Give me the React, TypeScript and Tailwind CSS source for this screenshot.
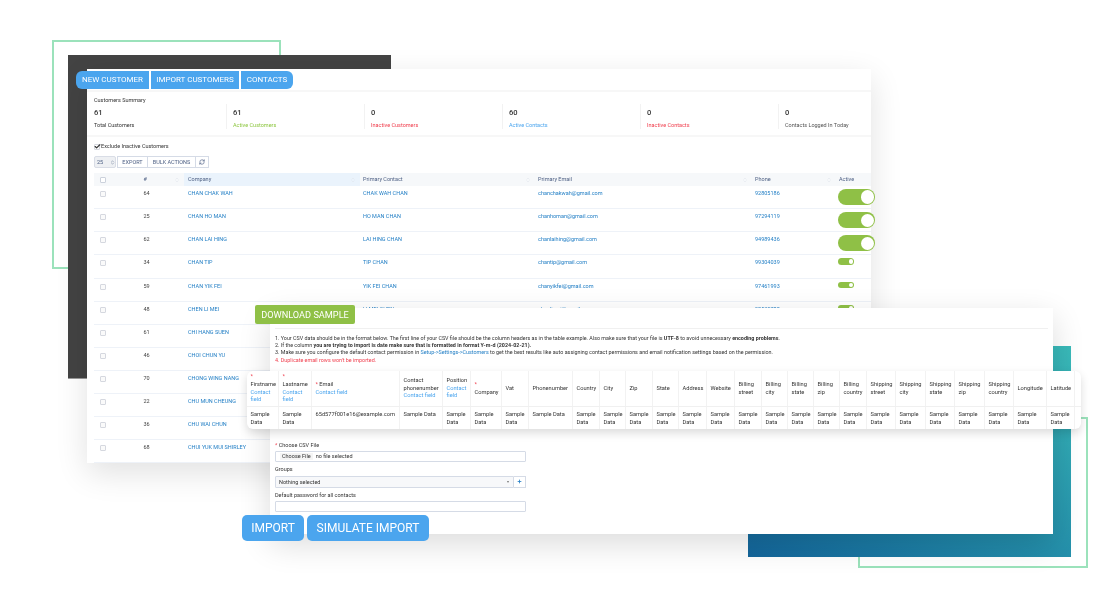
import React from 'react'
import { RefreshCw, Check, Plus, ChevronsUpDown } from 'lucide-react'

const customers = [
  ['64', 'CHAN CHAK WAH', 'CHAK WAH CHAN', 'chanchakwah@gmail.com', '92805186'],
  ['25', 'CHAN HO MAN', 'HO MAN CHAN', 'chanhoman@gmail.com', '97294119'],
  ['62', 'CHAN LAI HING', 'LAI HING CHAN', 'chanlaihing@gmail.com', '94989436'],
  ['34', 'CHAN TIP', 'TIP CHAN', 'chantip@gmail.com', '99304039'],
  ['59', 'CHAN YIK FEI', 'YIK FEI CHAN', 'chanyikfei@gmail.com', '97461993'],
  ['48', 'CHEN LI MEI', 'LI MEI CHEN', 'chenlimei@gmail.com', '98530788'],
  ['61', 'CHI HANG SUEN', 'CHI HANG SUEN', 'chihangsuen@gmail.com', '96112045'],
  ['46', 'CHOI CHUN YU', 'CHUN YU CHOI', 'choichunyu@gmail.com', '92340718'],
  ['70', 'CHONG WING NANG', 'WING NANG CHONG', 'chongwingnang@gmail.com', '93877120'],
  ['22', 'CHU MUN CHEUNG', 'MUN CHEUNG CHU', 'chumuncheung@gmail.com', '91220456'],
  ['36', 'CHU WAI CHUN', 'WAI CHUN CHU', 'chuwaichun@gmail.com', '95018823'],
  ['68', 'CHUI YUK MUI SHIRLEY', 'YUK MUI CHUI', 'chuiyukmui@gmail.com', '90673341'],
]

const summary = [
  { value: '61', label: 'Total Customers', color: 'text-[#333]' },
  { value: '61', label: 'Active Customers', color: 'text-[#8cc63f]' },
  { value: '0', label: 'Inactive Customers', color: 'text-[#f0404f]' },
  { value: '60', label: 'Active Contacts', color: 'text-[#4ba5ee]' },
  { value: '0', label: 'Inactive Contacts', color: 'text-[#f0404f]' },
  { value: '0', label: 'Contacts Logged In Today', color: 'text-[#555]' },
]

const csvColumns = [
  'Country', 'City', 'Zip', 'State', 'Address', 'Website', 'Billing street', 'Billing city', 'Billing state', 'Billing zip',
  'Billing country', 'Shipping street', 'Shipping city', 'Shipping state', 'Shipping zip', 'Shipping country', 'Longitude', 'Latitude',
]

const gridRow = 'grid grid-cols-[46px_44px_176px_175px_217px_84px_1fr]'
const csvGrid = 'grid grid-cols-[32px_33px_88px_43px_28px_31px_27px_44px_27px_26px_27px_26px_28px_28px_27px_26px_26px_26px_27px_29px_30px_29px_30px_29px_33px_28px]'

const Toggle = ({ big }: { big: boolean }) =>
  big ? (
    <div className="flex h-4 w-[37px] items-center justify-end rounded-full bg-[#8fc046] pr-[1px]">
      <div className="h-[13.5px] w-[13.5px] rounded-full bg-white" />
    </div>
  ) : (
    <div className="flex h-[6.5px] w-4 items-center justify-end rounded-full bg-[#8fc046] pr-[1px]">
      <div className="h-[4.5px] w-[4.5px] rounded-full bg-white" />
    </div>
  )

const SortMark = () => (
  <ChevronsUpDown className="absolute right-1 top-1/2 h-[6px] w-[6px] -translate-y-1/2 text-[#dfe3ea]" strokeWidth={2} />
)

const Required = () => <span className="text-[#f0404f]">*</span>

const CsvHead = ({ children }: { children: React.ReactNode }) => (
  <div className="flex items-center border-r border-[#f2f2f2] px-[3.5px]">
    <div>{children}</div>
  </div>
)

const CsvCell = ({ children }: { children: React.ReactNode }) => (
  <div className="flex items-start border-r border-[#f2f2f2] px-[3.5px] pt-[4px]">{children}</div>
)

const ContactField = () => <div className="text-[#4ba5ee]">Contact field</div>

export default function App() {
  return (
    <div className="relative h-[615px] w-[1112px] overflow-hidden bg-white font-['Roboto',sans-serif] blur-[0.3px]">
      {/* Decoration behind the windows */}
      <div className="absolute left-[52px] top-[40px] h-[229px] w-[229px] border-2 border-[#9be2bb]" />
      <div className="absolute left-[858px] top-[417px] h-[151px] w-[230px] border-2 border-[#9be2bb]" />
      <div className="absolute left-[68px] top-[55px] h-[324px] w-[323px] border-b border-[#999] bg-[#434343]" />
      <div className="absolute left-[748px] top-[346px] h-[211px] w-[323px] bg-gradient-to-tr from-[#14669b] to-[#3abab9]" />

      {/* Customers window */}
      <div className="absolute left-[87px] top-[69px] w-[784px] bg-white shadow-[0_10px_30px_rgba(0,0,0,0.12)]">
        <div className="h-[21px]" />
        <div className="h-[2px] bg-[#f7f7f7]" />
        <div className="h-[43px] px-[7px] pt-[5px]">
          <div className="text-[5.5px] leading-[7px] text-[#333]">Customers Summary</div>
          <div className="grid grid-cols-[138px_138px_138px_138px_138px_1fr]">
            {summary.map((s, i) => (
              <div key={i} className={i === 0 ? 'h-[25px]' : 'h-[25px] -ml-[6px] border-l border-[#f2f2f2] pl-[6px]'}>
                <div className="text-[7.5px] font-medium leading-[18px] text-[#333]">{s.value}</div>
                <div className={`text-[5.5px] leading-[7px] ${s.color}`}>{s.label}</div>
              </div>
            ))}
          </div>
        </div>
        <div className="h-[2px] bg-[#f7f7f7]" />

        <div className="h-[36px] px-[7px]">
          <div className="flex h-[19px] items-center gap-[1px] text-[5.5px] text-[#333]">
            <div className="flex h-[6px] w-[6px] items-center justify-center rounded-[1px] border border-[#d5d8df]">
              <Check className="h-[7px] w-[7px] shrink-0 text-[#333]" strokeWidth={4} />
            </div>
            Exclude Inactive Customers
          </div>
          <div className="flex h-[12px] items-center text-[5.5px] text-[#4f6185]">
            <div className="mr-[1px] flex h-[12px] w-[22px] items-center justify-between rounded-[2px] border border-[#d9dde6] bg-[#eef0f3] pl-[2px]">
              25
              <ChevronsUpDown className="h-[5px] w-[5px]" />
            </div>
            <div className="flex h-[12px] w-[31px] items-center justify-center border border-[#d5dbe6]">EXPORT</div>
            <div className="flex h-[12px] w-[48px] items-center justify-center border-y border-r border-[#d5dbe6]">BULK ACTIONS</div>
            <div className="flex h-[12px] w-[13px] items-center justify-center border-y border-r border-[#d5dbe6]">
              <RefreshCw className="h-[6px] w-[6px]" strokeWidth={2.5} />
            </div>
          </div>
        </div>

        <div className="pl-[7px] text-[5.5px]">
          <div className={`${gridRow} h-[13.2px] items-stretch bg-[#f6f8fa] leading-[13.2px] text-[#4f6185]`}>
            <div className="flex items-center pl-[6px]">
              <div className="h-[6px] w-[6px] rounded-[1px] border border-[#ccd2dc] bg-white" />
            </div>
            <div className="relative pl-[3.5px]">#<SortMark /></div>
            <div className="relative bg-[#eaf3fc] pl-[4px]">Company<SortMark /></div>
            <div className="relative pl-[3px]">Primary Contact<SortMark /></div>
            <div className="relative pl-[3px]">Primary Email<SortMark /></div>
            <div className="relative pl-[3px]">Phone<SortMark /></div>
            <div className="pl-[3px]">Active</div>
          </div>
          {customers.map((c, i) => (
            <div key={c[0]} className={`${gridRow} h-[23.1px] border-b border-[#eef2f8] pt-[3px] leading-[8px] text-[#2580c6]`}>
              <div className="pl-[6px] pt-[2px]">
                <div className="h-[6px] w-[6px] rounded-[1px] border border-[#d5d8df] bg-[#fafafa]" />
              </div>
              <div className="pl-[3.5px] text-[#444]">{c[0]}</div>
              <div className="pl-[4px]">{c[1]}</div>
              <div className="pl-[3px]">{c[2]}</div>
              <div className="pl-[3px]">{c[3]}</div>
              <div className="pl-[3px]">{c[4]}</div>
              <div className="pl-[2px]"><Toggle big={i < 3} /></div>
            </div>
          ))}
        </div>
      </div>

      {/* Tabs sitting over the customers window */}
      <div className="absolute left-[76px] top-[71px] flex h-[18px] gap-[2px] text-[8px] text-white">
        <div className="flex w-[73px] items-center justify-center rounded-l-[6px] bg-[#4ba5ee]">NEW CUSTOMER</div>
        <div className="flex w-[88px] items-center justify-center bg-[#4ba5ee]">IMPORT CUSTOMERS</div>
        <div className="flex w-[52px] items-center justify-center rounded-r-[6px] bg-[#4ba5ee]">CONTACTS</div>
      </div>

      {/* Import window */}
      <div className="absolute left-[270px] top-[308px] h-[226px] w-[783px] bg-white px-[5px] shadow-[0_10px_30px_rgba(0,0,0,0.14)]">
        <div className="h-[21px] border-b border-[#f0f0f0]" />
        <div className="pt-[6px] text-[5.38px] leading-[7.2px] text-[#333]">
          <div>1. Your CSV data should be in the format below. The first line of your CSV file should be the column headers as in the table example. Also make sure that your file is <b>UTF-8</b> to avoid unnecessary <b>encoding problems</b>.</div>
          <div>2. If the column <b>you are trying to import is date make sure that is formatted in format Y-m-d (2024-02-21).</b></div>
          <div>3. Make sure you configure the default contact permission in <span className="text-[#2580c6]">Setup-&gt;Settings-&gt;Customers</span> to get the best results like auto assigning contact permissions and email notification settings based on the permission.</div>
          <div className="text-[#f0404f]">4. Duplicate email rows won't be imported.</div>
        </div>

        <div className="mt-[78px] text-[5.5px] text-[#333]">
          <div className="h-[7px] leading-[7px]"><Required /> Choose CSV File</div>
          <div className="mt-[2px] flex h-[11px] w-[251px] items-center rounded-[1px] border border-[#d5dbe6] pl-[4px]">
            <span className="mr-[3px] bg-[#f5f5f5] px-[2px] leading-[7px] text-[#333]">Choose File</span>
            no file selected
          </div>
          <div className="mt-[4px] h-[7px] leading-[7px]">Groups</div>
          <div className="mt-[3px] flex h-[12px] w-[251px] items-stretch">
            <div className="flex flex-1 items-center justify-between rounded-l-[1px] border border-[#d5dbe6] bg-[#f7f8fa] pl-[3px] pr-[4px]">
              Nothing selected
              <span className="text-[4px] text-[#777]">▾</span>
            </div>
            <div className="flex w-[12px] items-center justify-center border-y border-r border-[#d5dbe6]">
              <Plus className="h-[5px] w-[5px] text-[#2580c6]" strokeWidth={4} />
            </div>
          </div>
          <div className="mt-[4px] h-[7px] leading-[7px]">Default password for all contacts</div>
          <div className="mt-[2.5px] h-[11px] w-[251px] rounded-[1px] border border-[#d5dbe6]" />
        </div>
      </div>

      {/* CSV sample table floating over the import window */}
      <div className="absolute left-[247px] top-[371px] h-[58px] w-[834px] rounded-[6px] bg-white text-[5.7px] leading-[7.6px] text-[#333] shadow-[0_4px_10px_rgba(0,0,0,0.14)]">
        <div className={`${csvGrid} h-[36px] border-b border-[#f0f0f0]`}>
          <CsvHead><div><Required /></div>Firstname<ContactField /></CsvHead>
          <CsvHead><div><Required /></div>Lastname<ContactField /></CsvHead>
          <CsvHead><Required /> Email<ContactField /></CsvHead>
          <CsvHead>Contact phonenumber<ContactField /></CsvHead>
          <CsvHead>Position<ContactField /></CsvHead>
          <CsvHead><div><Required /></div>Company</CsvHead>
          <CsvHead>Vat</CsvHead>
          <CsvHead>Phonenumber</CsvHead>
          {csvColumns.map((name) => (
            <CsvHead key={name}>{name}</CsvHead>
          ))}
        </div>
        <div className={`${csvGrid} h-[22px]`}>
          <CsvCell>Sample Data</CsvCell>
          <CsvCell>Sample Data</CsvCell>
          <CsvCell>65d577f001e16@example.com</CsvCell>
          <CsvCell>Sample Data</CsvCell>
          <CsvCell>Sample Data</CsvCell>
          <CsvCell>Sample Data</CsvCell>
          <CsvCell>Sample Data</CsvCell>
          <CsvCell>Sample Data</CsvCell>
          {csvColumns.map((name) => (
            <CsvCell key={name}>Sample Data</CsvCell>
          ))}
        </div>
      </div>

      {/* Buttons sitting over the import window */}
      <div className="absolute left-[255px] top-[305px] flex h-[19px] w-[100px] items-center justify-center rounded-[2px] bg-[#8fc046] text-[9.2px] text-white">
        DOWNLOAD SAMPLE
      </div>
      <div className="absolute left-[242px] top-[515px] flex h-[26px] gap-[3px] text-[12px] text-white">
        <div className="flex w-[62px] items-center justify-center rounded-[5px] bg-[#4ba5ee]">IMPORT</div>
        <div className="flex w-[122px] items-center justify-center rounded-[5px] bg-[#4ba5ee]">SIMULATE IMPORT</div>
      </div>
    </div>
  )
}
